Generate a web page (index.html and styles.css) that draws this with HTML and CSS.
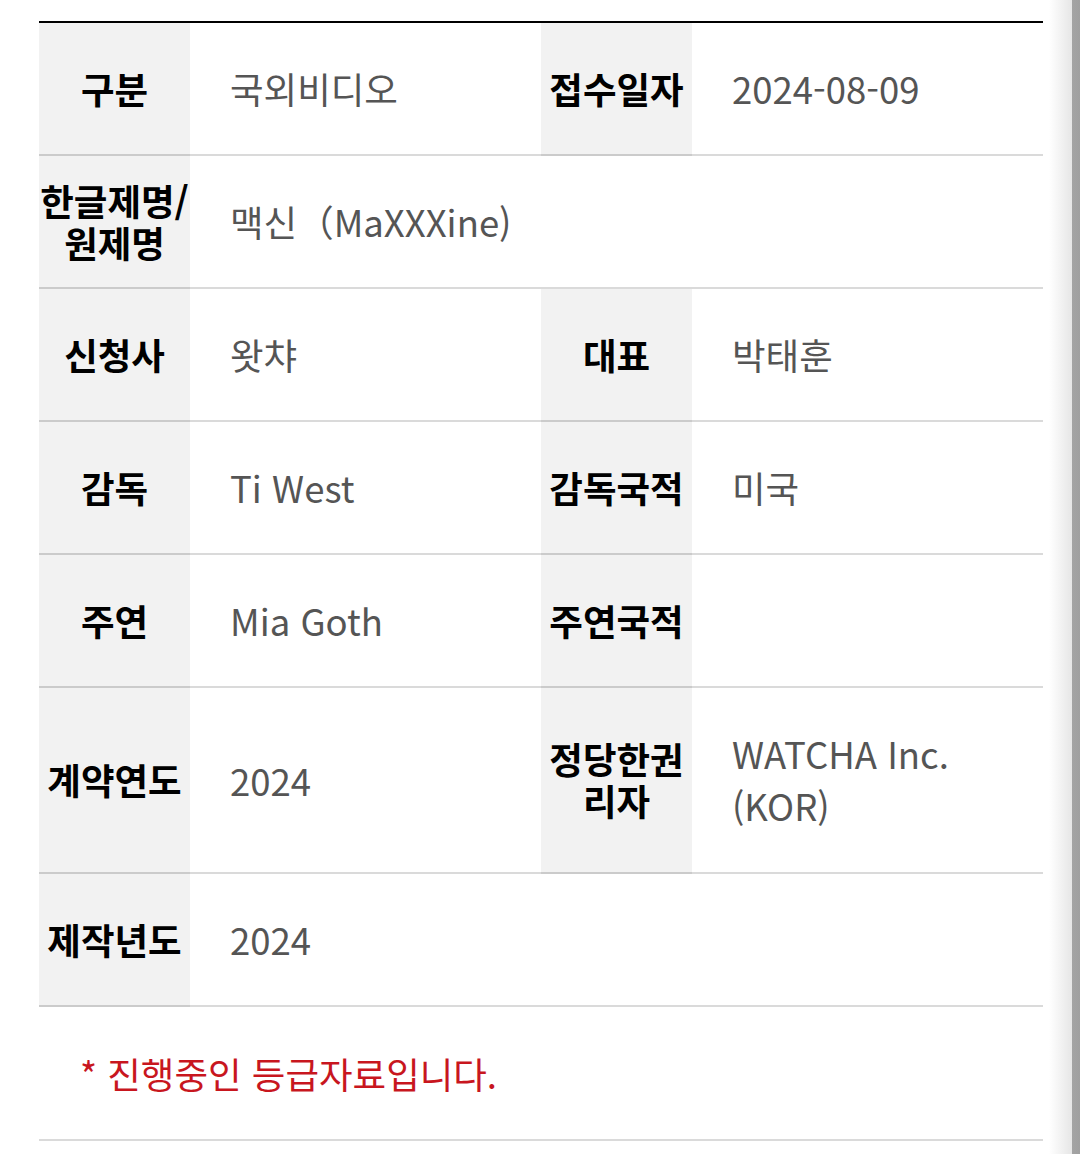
FILE: index.html
```html
<!DOCTYPE html>
<html lang="ko">
<head>
<meta charset="utf-8">
<link rel="stylesheet" href="styles.css">
</head>
<body>
<div class="page">
  <div class="content">
    <table class="info">
      <colgroup>
        <col class="c-label"><col class="c-value"><col class="c-label"><col class="c-value">
      </colgroup>
      <tbody>
        <tr>
          <th>구분</th><td>국외비디오</td>
          <th>접수일자</th><td>2024-08-09</td>
        </tr>
        <tr>
          <th>한글제명/<br>원제명</th><td colspan="3">맥신（MaXXXine)</td>
        </tr>
        <tr>
          <th>신청사</th><td>왓챠</td>
          <th>대표</th><td>박태훈</td>
        </tr>
        <tr>
          <th>감독</th><td>Ti West</td>
          <th>감독국적</th><td>미국</td>
        </tr>
        <tr>
          <th>주연</th><td>Mia Goth</td>
          <th>주연국적</th><td></td>
        </tr>
        <tr>
          <th>계약연도</th><td>2024</td>
          <th>정당한권<br>리자</th><td class="multi">WATCHA Inc.<br>(KOR)</td>
        </tr>
        <tr>
          <th>제작년도</th><td colspan="3">2024</td>
        </tr>
      </tbody>
    </table>
    <p class="note">* 진행중인 등급자료입니다.</p>
  </div>
  <div class="edge"></div>
</div>
</body>
</html>
```
FILE: styles.css
```css
html, body {
  margin: 0;
  padding: 0;
  background: #fff;
}
.page {
  display: flex;
  width: 1080px;
  min-height: 1154px;
}
.content {
  width: 1004px;
  padding: 21px 0 0 39px;
  font-family: "Noto Sans CJK KR", "Noto Sans", sans-serif;
  font-size: 36.5px;
}
.info {
  width: 1004px;
  border-collapse: collapse;
  table-layout: fixed;
  border-top: 2px solid #000;
}
.c-label { width: 151px; }
.c-value { width: 351px; }
.info th {
  background: #f2f2f2;
  color: #000;
  font-weight: 700;
  text-align: center;
  vertical-align: middle;
  line-height: 42px;
  padding: 20px 0;
  border-bottom: 2px solid #cbcbcb;
  white-space: nowrap;
}
.info td {
  color: #555;
  font-weight: 400;
  text-align: left;
  vertical-align: middle;
  line-height: 51px;
  padding: 40px 20px 40px 40px;
  border-bottom: 2px solid #dadada;
}
.info td.multi {
  line-height: 52px;
}
.note {
  margin: 0;
  padding: 41px 41px 40px;
  line-height: 51px;
  color: #c8161e;
  border-bottom: 2px solid #dadada;
}
.edge {
  flex: 1;
  background: linear-gradient(to right, #fff 0px, #fff 6px, #e6e6e6 29px, #a4a4a4 29px, #a0a0a0 100%);
}
```
